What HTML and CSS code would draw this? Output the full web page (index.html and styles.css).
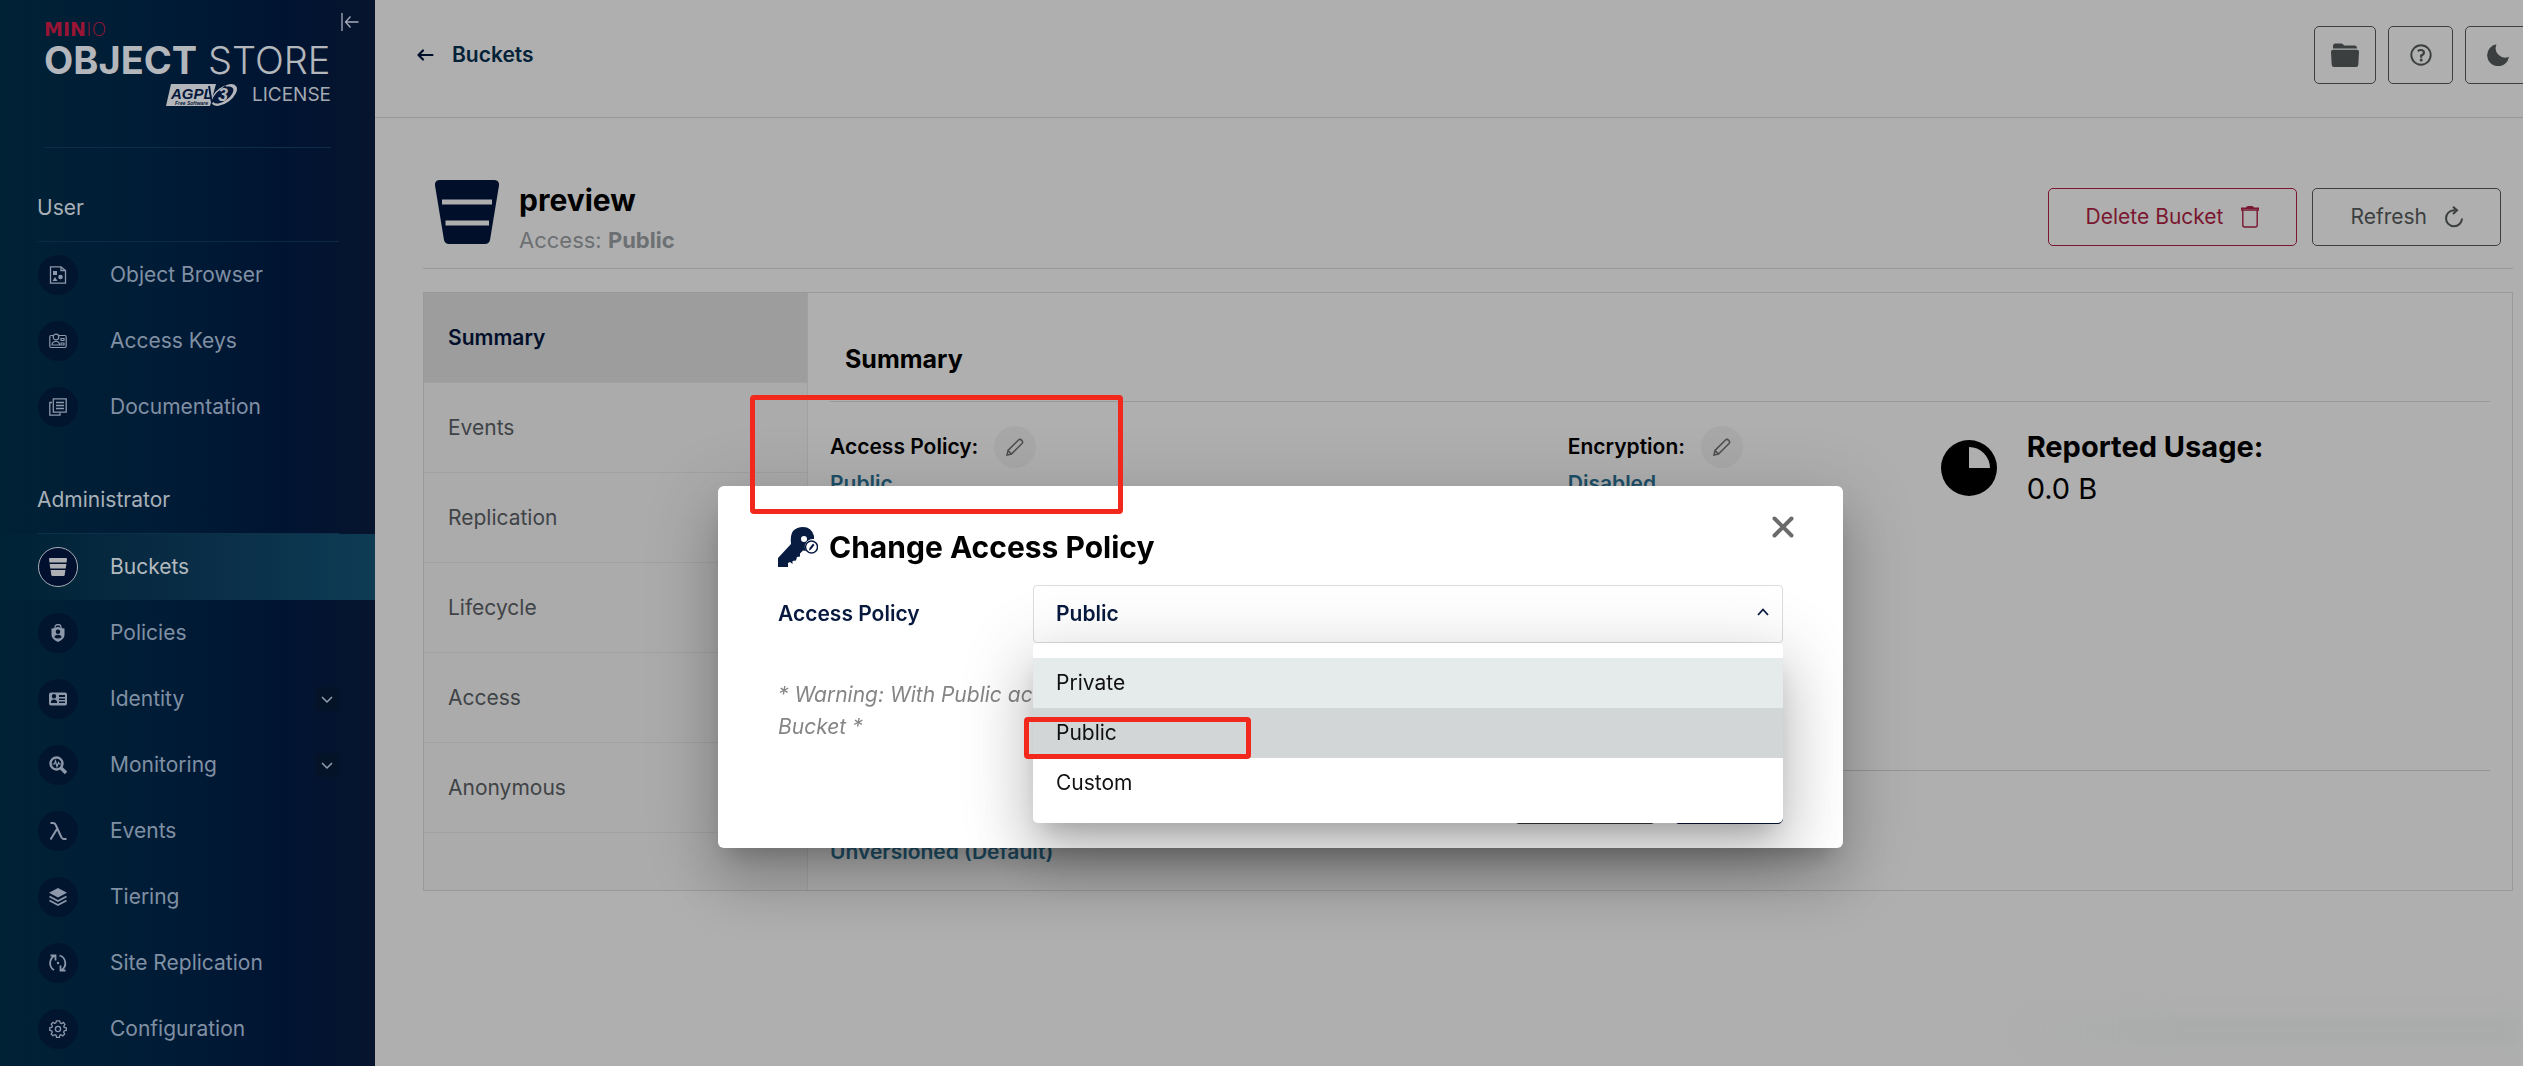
FILE: index.html
```html
<!DOCTYPE html>
<html lang="en">
<head>
<meta charset="utf-8">
<meta name="viewport" content="width=device-width, initial-scale=1">
<title>MinIO Console</title>
<link rel="stylesheet" href="styles.css">
</head>
<body>
<div class="app">
  <aside class="sidebar">
    <div class="brand">
      <div class="brand-minio"><b>MIN</b><span>IO</span></div>
      <div class="brand-name"><b>OBJECT</b> <span>STORE</span></div>
      <div class="brand-license">
        <svg class="agpl" viewBox="0 0 72 24" role="img" aria-label="AGPL v3">
          <path d="M5 1H50L44 23H0Z" fill="#b3b6bb"/>
          <ellipse cx="58" cy="12" rx="15" ry="8" transform="rotate(-36 58 12)" fill="#b3b6bb"/>
          <ellipse cx="57" cy="12" rx="12" ry="6" transform="rotate(-36 57 12)" fill="#06183a"/>
          <path d="M43 3C44 8 44 12 46 19C50 13 54 8 60 3" fill="none" stroke="#06183a" stroke-width="2"/>
          <text x="5" y="16" class="agpl-name">AGPL</text>
          <text x="9" y="22" class="agpl-sub">Free Software</text>
          <text x="52" y="18" class="agpl-three">3</text>
        </svg>
        <span>LICENSE</span>
      </div>
      <button class="collapse" aria-label="Collapse menu">
        <svg viewBox="0 0 18 18" fill="none" stroke="#a5adb8" stroke-width="1.3"><path d="M1 0V18M17.5 9H5M9.5 3.5L4.5 9L9.5 14.500"/></svg>
      </button>
    </div>

    <h2 class="group">User</h2>
    <nav class="menu">
      <a href="#"><span class="ic"><svg viewBox="0 0 18 18" fill="none" stroke="currentColor" stroke-width="1.300"><path d="M1.500 .8H12L16.500 4.500V17.200H1.500ZM12 .8V4.500H16.500"/><path d="M4 5H8V9H4ZM6 11L8.500 15H3.500Z" fill="currentColor" stroke="none"/><circle cx="11.500" cy="11" r="2.300" fill="currentColor" stroke="none"/></svg></span>Object Browser</a>
      <a href="#"><span class="ic"><svg viewBox="0 0 18 18" fill="none" stroke="currentColor" stroke-width="1.200"><path d="M4 3.500H2Q.8 3.500 .8 5V14Q.8 15.500 2 15.500H16Q17.200 15.500 17.200 14V5Q17.200 3.500 16 3.500H10"/><circle cx="7" cy="5" r="2.800"/><path d="M3 13Q3 9.500 7 9.500Q10.500 9.500 10.500 13ZM12 6.500H15V8.500H12ZM12 11H15V13H12Z"/></svg></span>Access Keys</a>
      <a href="#"><span class="ic"><svg viewBox="0 0 18 18" fill="none" stroke="currentColor" stroke-width="1.300"><path d="M4.300 .8H17.200V14.200H4.300ZM3 4.500H.8V17.200H11V15M7 4.500H15M7 7.500H15M7 10.500H15"/></svg></span>Documentation</a>
    </nav>

    <h2 class="group group-admin">Administrator</h2>
    <nav class="menu">
      <a href="#" class="active" aria-current="page"><span class="ic"><svg viewBox="0 0 18 18"><path fill="currentColor" d="M1 0H17Q18 0 18 1L17.600 4.500H.4L0 1Q0 0 1 0ZM.6 6H17.400L16.700 10.500H1.300ZM1.600 12H16.400L15.700 17Q15.500 18 14.500 18H3.500Q2.500 18 2.300 17Z"/></svg></span>Buckets</a>
      <a href="#"><span class="ic"><svg viewBox="0 0 18 18"><path fill="none" stroke="currentColor" stroke-width="1.300" d="M6 4V3A3 2.500 0 0 1 12 3V4"/><path fill="currentColor" fill-rule="evenodd" d="M2.500 4.500Q6 4.500 9 2.800Q12 4.500 15.500 4.500V11Q15.500 15 9 18Q2.500 15 2.500 11ZM9 5.500A2.300 2.300 0 1 0 9 10.100A2.300 2.300 0 1 0 9 5.500ZM9 10.800Q5.500 11 5.500 13.500Q9 15.500 12.500 13.500Q12.500 11 9 10.800Z"/></svg></span>Policies</a>
      <a href="#"><span class="ic"><svg viewBox="0 0 18 18"><path fill="currentColor" fill-rule="evenodd" d="M2 2.500H16Q18 2.500 18 4.500V13.500Q18 15.500 16 15.500H2Q0 15.500 0 13.500V4.500Q0 2.500 2 2.500ZM10 5V7H16V5ZM10 8.500V10H16V8.500ZM10 11.500V13H16V11.500ZM5 4A2.200 2.200 0 1 0 5 8.400A2.200 2.200 0 1 0 5 4ZM1.800 13H8.200Q8.200 9.500 5 9.500Q1.800 9.500 1.800 13Z"/></svg></span>Identity<svg class="chev" viewBox="0 0 24 24"><rect width="24" height="24" rx="3" fill="#051329"/><path d="M7 10L12 15L17 10" fill="none" stroke="#96a0ae" stroke-width="1.500"/></svg></a>
      <a href="#"><span class="ic"><svg viewBox="0 0 18 18" fill="none" stroke="currentColor"><circle cx="7.500" cy="7.500" r="6" stroke-width="2.400"/><path stroke-width="3.400" d="M12 12L17 17"/><path stroke-width="1.200" d="M3.500 8H5.500L6.500 5L8 10.500L9.500 6.500L10.300 8H12"/></svg></span>Monitoring<svg class="chev" viewBox="0 0 24 24"><rect width="24" height="24" rx="3" fill="#051329"/><path d="M7 10L12 15L17 10" fill="none" stroke="#96a0ae" stroke-width="1.500"/></svg></a>
      <a href="#"><span class="ic"><svg viewBox="0 0 18 18" fill="none" stroke="currentColor" stroke-width="2"><path d="M1.500 1H4Q6 1 7 3.500L12 14.500Q13 17 15 17H17.500M8.300 6.500L1.500 17.500"/></svg></span>Events</a>
      <a href="#"><span class="ic"><svg viewBox="0 0 18 18"><path fill="currentColor" d="M9 0L18 4.800L9 9.600L0 4.800Z"/><path fill="none" stroke="currentColor" stroke-width="1.700" d="M.5 8.500L9 13L17.500 8.500M.5 12.500L9 17L17.500 12.500"/></svg></span>Tiering</a>
      <a href="#"><span class="ic"><svg viewBox="0 0 18 18" fill="none" stroke="currentColor" stroke-width="1.800"><path d="M5 16A8 8 0 0 1 5.500 2M1.500 1.500H6.500V6.500M10.500 1.500A8 8 0 0 1 12.500 16M16.500 16.500H11.500V11.500"/><circle cx="9" cy="9" r="1.200" fill="currentColor" stroke="none"/></svg></span>Site Replication</a>
      <a href="#"><span class="ic"><svg viewBox="0 0 18 18" fill="none" stroke="currentColor" stroke-width="1.300" stroke-linejoin="round"><path d="M7.300 .8H10.700L11.200 3L12.600 3.600L14.500 2.400L16 4.600L14.700 6.300L15.200 7.400L17.300 7.800V10.400L15.200 10.800L14.600 12.200L15.700 14L13.800 15.900L12 14.700L10.900 15.200L10.500 17.300H7.500L7.100 15.200L5.800 14.700L4 15.800L2.200 14L3.300 12.200L2.800 10.800L.8 10.400V7.700L2.800 7.300L3.400 6L2.200 4.200L4.100 2.300L5.900 3.400L6.900 3Z"/><circle cx="9" cy="9" r="2.600"/></svg></span>Configuration</a>
    </nav>
  </aside>

  <div class="page">
    <header class="topbar">
      <a href="#" class="back"><svg viewBox="0 0 17 12" fill="none" stroke="currentColor" stroke-width="2.200" stroke-linecap="round" stroke-linejoin="round"><path d="M15.500 6H2M6 1.500L1.500 6L6 10.500"/></svg>Buckets</a>
      <div class="tools">
        <button class="btn tool tool-folder" aria-label="Object uploads"><svg viewBox="0 0 28 24"><path fill="currentColor" d="M2 5.500V3Q2 .5 4.500 .5H10.500Q12 .5 13 2.500H23.500Q26 2.500 26 5.500ZM2 6.800H26Q28 6.800 28 9L27.300 21.500Q27.200 24 25 24H3Q.8 24 .7 21.500L0 9Q0 6.800 2 6.800Z"/></svg></button>
        <button class="btn tool" aria-label="Help"><svg viewBox="0 0 22 22" fill="none" stroke="currentColor" stroke-width="1.900"><circle cx="11" cy="11" r="9.700"/><path d="M7.800 7Q11 5 13.500 7Q15 10 11.200 11.500V13.800" stroke-width="2.200"/><circle cx="11.200" cy="16" r="1.500" fill="currentColor" stroke="none"/></svg></button>
        <button class="btn tool" aria-label="Dark mode"><svg viewBox="0 0 22 22"><path fill="currentColor" d="M9.500 .3A11 11 0 1 0 22 12.800A9.500 9.500 0 0 1 9.500 .3Z"/></svg></button>
      </div>
    </header>

    <main class="content">
      <section class="bucket-head">
        <svg class="bucket" viewBox="0 0 64 64"><path fill="#020f2b" fill-rule="evenodd" d="M5 0H59Q64.500 0 64 5.500L55 60Q54 64 50 64H14Q10 64 9 60L0 5.500Q-.5 0 5 0ZM7 19.500V24.500H57V19.500ZM10.500 40.500V45.500H54V40.500Z"/></svg>
        <div class="bucket-text">
          <h1>preview</h1>
          <p>Access: <b>Public</b></p>
        </div>
        <div class="actions">
          <button class="btn danger">Delete Bucket<svg viewBox="0 0 18 22" fill="none" stroke="currentColor" stroke-width="1.400"><path d="M.5 4V2.200H17.500V4ZM5.500 2Q6 .8 7 .8H11Q12 .8 12.500 2M1.800 4V19Q1.800 21 3.800 21H14.200Q16.200 21 16.200 19V4"/></svg></button>
          <button class="btn">Refresh<svg viewBox="0 0 18 22" fill="none" stroke="currentColor" stroke-width="2"><path d="M10.500 4.300H9A8 8 0 1 0 17 12.500"/><path d="M8 .8L12 4.300L8 8"/></svg></button>
        </div>
      </section>

      <section class="panel">
        <nav class="tabs">
          <a href="#" class="on">Summary</a>
          <a href="#">Events</a>
          <a href="#">Replication</a>
          <a href="#">Lifecycle</a>
          <a href="#">Access</a>
          <a href="#">Anonymous</a>
        </nav>
        <div class="summary">
          <h2>Summary</h2>
          <div class="grid details">
            <div class="grid">
              <div>
                <div class="field">Access Policy:<button class="edit" aria-label="Edit access policy"><svg viewBox="0 0 18 18"><path d="M1 17L2 12.500L12.500 2Q14 .6 15.700 2.300Q17.400 4 16 5.500L5.500 16ZM2 12.500L5.500 16"/></svg></button></div>
                <a href="#" class="value">Public</a>
              </div>
              <div>
                <div class="field">Encryption:<button class="edit" aria-label="Edit encryption"><svg viewBox="0 0 18 18"><path d="M1 17L2 12.500L12.500 2Q14 .6 15.700 2.300Q17.400 4 16 5.500L5.500 16ZM2 12.500L5.500 16"/></svg></button></div>
                <a href="#" class="value">Disabled</a>
              </div>
            </div>
            <div class="usage">
              <svg viewBox="0 0 56 56"><path fill="#000" fill-rule="evenodd" d="M28 0A28 28 0 1 0 28 56A28 28 0 1 0 28 0ZM28 7A21 21 0 0 1 49 28H28Z"/></svg>
              <div><h3>Reported Usage:</h3><p>0.0 B</p></div>
            </div>
          </div>
          <div class="versioning"><a href="#" class="value">Unversioned (Default)</a></div>
        </div>
      </section>
    </main>
  </div>
</div>

<div class="overlay">
  <div class="modal" role="dialog" aria-labelledby="dlg-title">
    <button class="close" aria-label="Close"><svg viewBox="0 0 22 22"><path d="M2.500 2.500L19.500 19.500M19.500 2.500L2.500 19.500" stroke="#6b6b6b" stroke-width="4" stroke-linecap="round"/></svg></button>
    <h2 id="dlg-title"><svg viewBox="0 0 40 40"><path fill="#081c42" fill-rule="evenodd" d="M25 0Q33.500 0 36 9V12A8 8 0 0 0 28 24L25 23.500L22 26.500L22 29.500L19 30L18 33.500L14.500 34L14.500 37L12 35L10 36V40H0V31L13 17Q12 8 15 4Q19 0 25 0ZM26 9A3 3 0 1 0 26 15A3 3 0 1 0 26 9Z"/><circle cx="33.500" cy="20" r="6" fill="#fff" stroke="#081c42" stroke-width="1.500"/><path d="M31 23.500L31.500 21L35 16.500L36.500 18L33 22.500Z" fill="#081c42"/></svg>Change Access Policy</h2>
    <div class="row">
      <label for="policy">Access Policy</label>
      <div class="select-wrap">
        <select id="policy"><option>Private</option><option selected>Public</option><option>Custom</option></select>
        <svg class="caret" viewBox="0 0 12 8"><path d="M1 7L6 1.500L11 7" fill="none" stroke="#07193e" stroke-width="1.800"/></svg>
        <ul class="options">
          <li class="hover">Private</li>
          <li class="selected">Public</li>
          <li>Custom</li>
        </ul>
      </div>
    </div>
    <p class="warning">* Warning: With Public access anyone will be able to upload and download files from this<br>Bucket *</p>
    <div class="buttons"><button class="btn clear">Clear</button><button class="btn set">Set</button></div>
  </div>
</div>
<div class="mark mark-policy"></div>
<div class="mark mark-option"></div>
<div class="smudge"></div>
</body>
</html>
```

FILE: styles.css
```css
* { box-sizing: border-box; }
body { margin: 0; background: #afafaf; color: #000; font: 21px/32px Inter, "Liberation Sans", sans-serif; overflow: hidden; }
h1, h2, h3, p, ul { margin: 0; padding: 0; }
a { color: inherit; text-decoration: none; }
button { font: inherit; color: inherit; background: none; border: 0; padding: 0; }
svg { display: block; flex: none; }

.app { display: flex; min-height: 100vh; }

/* Sidebar */
.sidebar { flex: none; width: 375px; background: linear-gradient(90deg, #002235 0%, #001b36 45%, #001432 75%, #07142d 100%); }
.brand { position: relative; height: 148px; margin: 0 44px; padding-top: 19px; border-bottom: 1px solid #0d2c47; }
.brand-minio { color: #9a1535; font: 19px/20px "DejaVu Sans", sans-serif; }
.brand-minio b { font-weight: 700; }
.brand-minio span { font-weight: 200; }
.brand-name { color: #b3b6bb; font-size: 38px; line-height: 42px; white-space: nowrap; }
.brand-name b { font-weight: 700; }
.brand-name span { font-weight: 300; }
.brand-license { display: flex; justify-content: flex-end; align-items: center; gap: 14px; padding-top: 2px; color: #a3a9b1; font-size: 19px; line-height: 24px; }
.agpl { width: 72px; height: 24px; }
.agpl-name { font: italic 700 15px "Liberation Sans", sans-serif; fill: #06183a; }
.agpl-sub { font: italic 700 5px "Liberation Sans", sans-serif; fill: #06183a; }
.agpl-three { font: italic 700 18px "Liberation Sans", sans-serif; fill: #b3b6bb; }
.collapse { position: absolute; top: 13px; right: -28px; }
.collapse svg { width: 18px; height: 18px; }
.group { margin: 27px 36px 0 37px; height: 67px; line-height: 66px; font-size: 21px; font-weight: 400; color: #a9b0b8; border-bottom: 1px solid #0b2a43; }
.group-admin { border-color: #0b3048; }
.menu a { display: flex; align-items: center; height: 66px; padding: 0 36px 0 38px; color: #8090a4; }
.ic { display: grid; place-items: center; flex: none; width: 40px; height: 40px; margin-right: 32px; border-radius: 50%; background: #02152f; border: 1px solid transparent; color: #8d98aa; }
.ic svg { width: 18px; height: 18px; }
.menu .active { color: #b3babf; background: linear-gradient(90deg, #002235, #0b2f49 60%, #0d3c54); }
.active .ic { border-color: #a8adb5; color: #aeb0b3; background: #02102f; }
.chev { width: 24px; height: 24px; margin-left: auto; }

/* Top bar */
.page { flex: 1; min-width: 0; }
.topbar { display: flex; justify-content: space-between; align-items: center; height: 118px; padding: 0 0 7px 42px; border-bottom: 1px solid #989898; }
.back { display: flex; align-items: center; gap: 18px; color: #042238; font-weight: 600; }
.back svg { width: 17px; height: 12px; color: #020f2b; }
.tools { display: flex; gap: 12px; margin-right: -7px; }
.btn { display: flex; align-items: center; justify-content: center; height: 58px; border: 1px solid #3c3f3f; border-radius: 5px; color: #3c3f3f; }
.tool { width: 65px; }
.tool svg { width: 22px; height: 22px; }
.tool-folder { width: 62px; }
.tool-folder svg { width: 28px; height: 24px; }

/* Bucket header */
.content { padding: 60px 10px 0 48px; }
.bucket-head { display: flex; align-items: flex-start; height: 91px; padding: 2px 12px 0; border-bottom: 1px solid #989898; }
.bucket { width: 64px; height: 64px; }
.bucket-text { margin-left: 20px; }
.bucket-text h1 { font-size: 30px; line-height: 40px; font-weight: 700; }
.bucket-text p { font-size: 22px; line-height: 40px; color: #6d7073; }
.actions { display: flex; gap: 15px; margin: 8px 0 0 auto; }
.actions .btn { padding: 0 37px; gap: 18px; }
.actions svg { width: 18px; height: 22px; }
.actions .danger { color: #7a1730; border-color: #7a1730; }

/* Tabs and summary */
.panel { display: flex; margin-top: 23px; min-height: 598px; border: 1px solid #999; }
.tabs { flex: none; width: 384px; background: #ababab; border-right: 1px solid #a1a1a1; }
.tabs a { display: flex; align-items: center; height: 90px; padding: 0 24px; color: #3f4347; border-bottom: 1px solid #a1a1a1; }
.tabs .on { color: #020f2b; background: #9d9d9d; font-weight: 600; }
.summary { flex: 1; min-width: 0; padding: 22px; }
.summary h2 { height: 87px; padding: 0 15px; line-height: 88px; font-size: 25px; font-weight: 700; border-bottom: 1px solid #999; }
.grid { display: grid; grid-template-columns: 2fr 1fr; }
.details { padding-top: 24px; height: 369px; border-bottom: 1px solid #949494; align-items: start; }
.field { display: flex; align-items: center; gap: 16px; height: 42px; font-weight: 600; }
.edit { display: grid; place-items: center; width: 42px; height: 42px; border-radius: 50%; background: #a8a8a8; }
.edit svg { width: 18px; height: 18px; fill: none; stroke: #4d4d4d; stroke-width: 1.5; }
.value { display: inline-block; color: #1d4f68; font-weight: 600; }
.usage { display: flex; gap: 30px; padding-left: 4px; }
.usage svg { width: 56px; height: 56px; margin-top: 14px; }
.usage h3, .usage p { font-size: 29px; line-height: 42px; }
.versioning { padding-top: 65px; }

/* Dialog */
.overlay { position: fixed; inset: 0; display: flex; justify-content: center; align-items: flex-start; padding: 486px 0 0 38px; }
.modal { position: relative; width: 1125px; padding: 36px 60px 24px; background: #fff; border-radius: 6px; box-shadow: 0 16px 22px -10px rgba(0,0,0,.2), 0 36px 57px 4px rgba(0,0,0,.14), 0 14px 69px 12px rgba(0,0,0,.12); }
.modal h2 { display: flex; align-items: center; gap: 11px; height: 50px; font-size: 30px; font-weight: 700; }
.modal h2 svg { width: 40px; height: 40px; }
.close { position: absolute; top: 30px; right: 49px; }
.close svg { width: 22px; height: 22px; }
.row { display: flex; align-items: center; margin-top: 13px; }
.row label { width: 255px; color: #07193e; font-weight: 600; }
.select-wrap { position: relative; flex: 1; }
.select-wrap select { display: block; width: 100%; height: 58px; padding: 0 22px; appearance: none; font: inherit; font-weight: 600; color: #07193e; background: #fff; border: 1px solid #dcdcdc; border-radius: 4px; }
.caret { position: absolute; right: 14px; top: 23px; width: 12px; height: 8px; }
.options { position: absolute; top: 58px; left: 0; right: 0; height: 180px; padding: 15px 0; list-style: none; background: #fff; border-radius: 5px; box-shadow: 0 16px 22px -10px rgba(0,0,0,.2), 0 36px 57px 4px rgba(0,0,0,.14), 0 14px 69px 12px rgba(0,0,0,.12); }
.options li { height: 50px; padding: 0 23px; line-height: 50px; color: #111; }
.options .hover { background: #e5eaea; }
.options .selected { background: #d2d6d6; }
.warning { margin-top: 36px; font-style: italic; color: #858585; }
.buttons { display: flex; justify-content: flex-end; gap: 18px; margin-top: 23px; }
.clear { width: 142px; }
.set { width: 109px; background: #07193e; border-color: #07193e; color: #fff; }

/* Annotations */
.mark { position: absolute; border: 5px solid #f3281c; border-radius: 4px; }
.mark-policy { left: 750px; top: 395px; width: 373px; height: 119px; }
.mark-option { left: 1024px; top: 717px; width: 227px; height: 42px; }
.smudge { position: absolute; right: 4px; bottom: 20px; width: 500px; height: 30px; background: linear-gradient(90deg, transparent, #a9acab 30%); filter: blur(8px); }
```
